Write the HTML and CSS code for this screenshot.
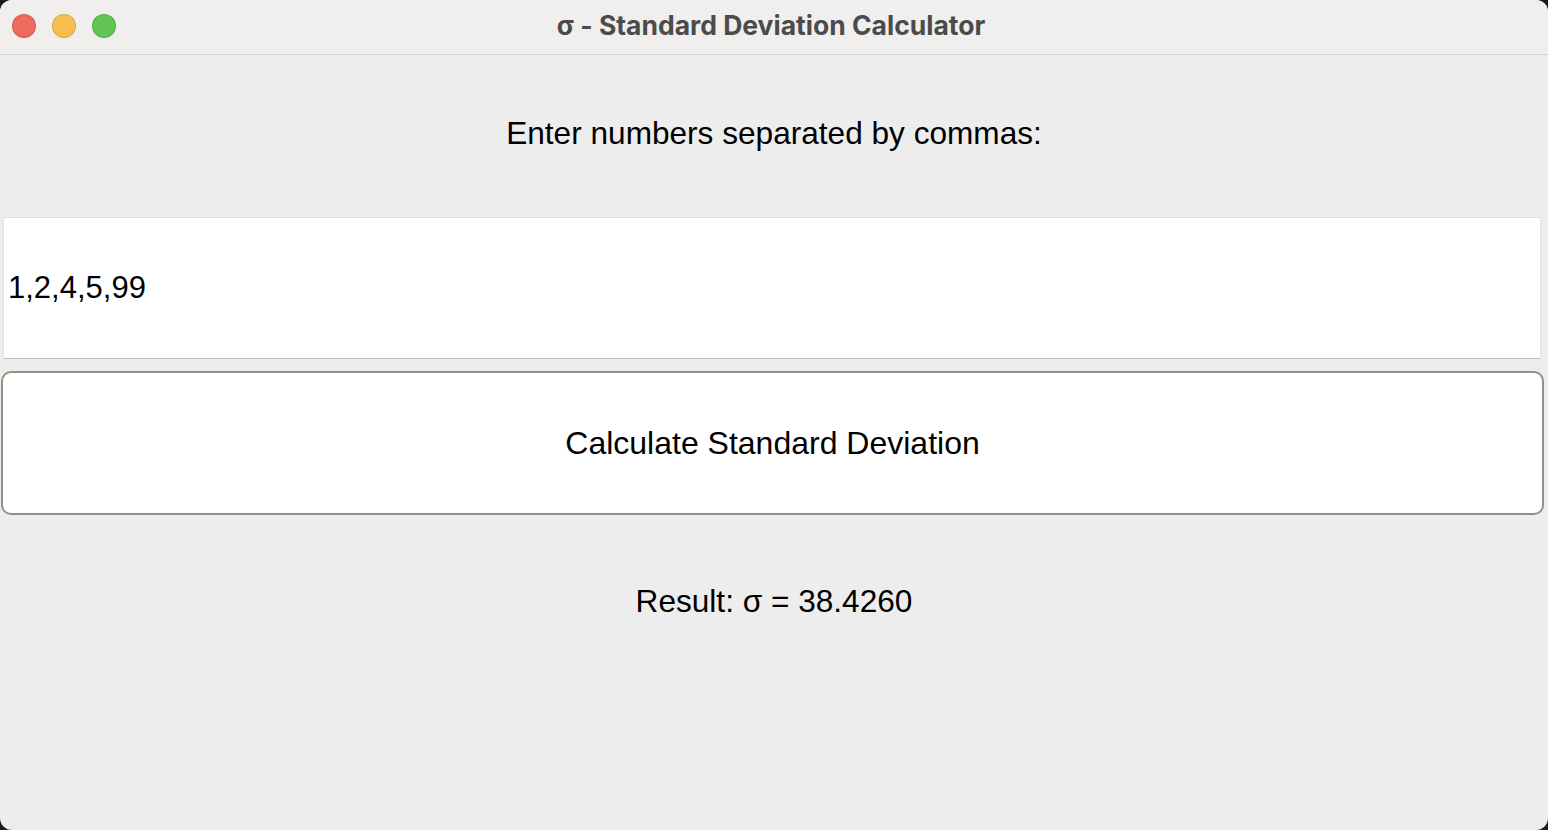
FILE: index.html
```html
<!DOCTYPE html>
<html>
<head>
<meta charset="utf-8">
<link rel="stylesheet" href="styles.css">
</head>
<body>
<div class="window">
  <div class="titlebar">
    <div class="lights">
      <span class="light red"></span>
      <span class="light yellow"></span>
      <span class="light green"></span>
    </div>
    <div class="title">σ - Standard Deviation Calculator</div>
  </div>
  <div class="content">
    <div class="prompt">Enter numbers separated by commas:</div>
    <div class="entry">1,2,4,5,99</div>
    <div class="button">Calculate Standard Deviation</div>
    <div class="result">Result: σ = 38.4260</div>
  </div>
</div>
</body>
</html>
```
FILE: styles.css
```css
html, body {
  margin: 0;
  padding: 0;
  background: #1a1c18;
  width: 1548px;
  height: 830px;
  overflow: hidden;
}
.window {
  width: 1548px;
  height: 830px;
  background: #ededed;
  border-radius: 12px;
  overflow: hidden;
  display: flex;
  flex-direction: column;
}
.titlebar {
  height: 54px;
  flex: none;
  background: #f0efee;
  border-bottom: 1px solid #d2d2d2;
  position: relative;
  display: flex;
  align-items: center;
  justify-content: center;
}
.lights {
  position: absolute;
  left: 12px;
  top: 14px;
  display: flex;
  gap: 16px;
}
.light {
  width: 22px;
  height: 22px;
  border-radius: 50%;
  border: 1px solid rgba(0,0,0,0.12);
}
.red { background: #ee695e; }
.yellow { background: #f5bf4f; }
.green { background: #61c554; }
.title {
  font-family: Inter, "Noto Sans", sans-serif;
  font-weight: 700;
  font-size: 26.5px;
  color: #4b4b4b;
  margin-top: -5px;
  padding-right: 6px;
}
.content {
  flex: 1;
  display: flex;
  flex-direction: column;
  font-family: "Liberation Sans", Arial, sans-serif;
  color: #000;
}
.prompt {
  font-size: 31.6px;
  text-align: center;
  margin-top: 63px;
  height: 30px;
  line-height: 30px;
}
.entry {
  margin: 69px 7px 0 3px;
  height: 140px;
  background: #fff;
  border: 1px solid #e0e0e0;
  border-bottom: 1px solid #bdbdbd;
  font-size: 31px;
  display: flex;
  align-items: center;
  padding-left: 4px;
}
.button {
  margin: 12px 4px 0 1px;
  height: 140px;
  background: #fff;
  border: 2px solid #86987f;
  border-radius: 10px;
  font-size: 32px;
  display: flex;
  align-items: center;
  justify-content: center;
}
.result {
  font-size: 31.6px;
  text-align: center;
  margin-top: 71px;
  height: 30px;
  line-height: 30px;
}
```
